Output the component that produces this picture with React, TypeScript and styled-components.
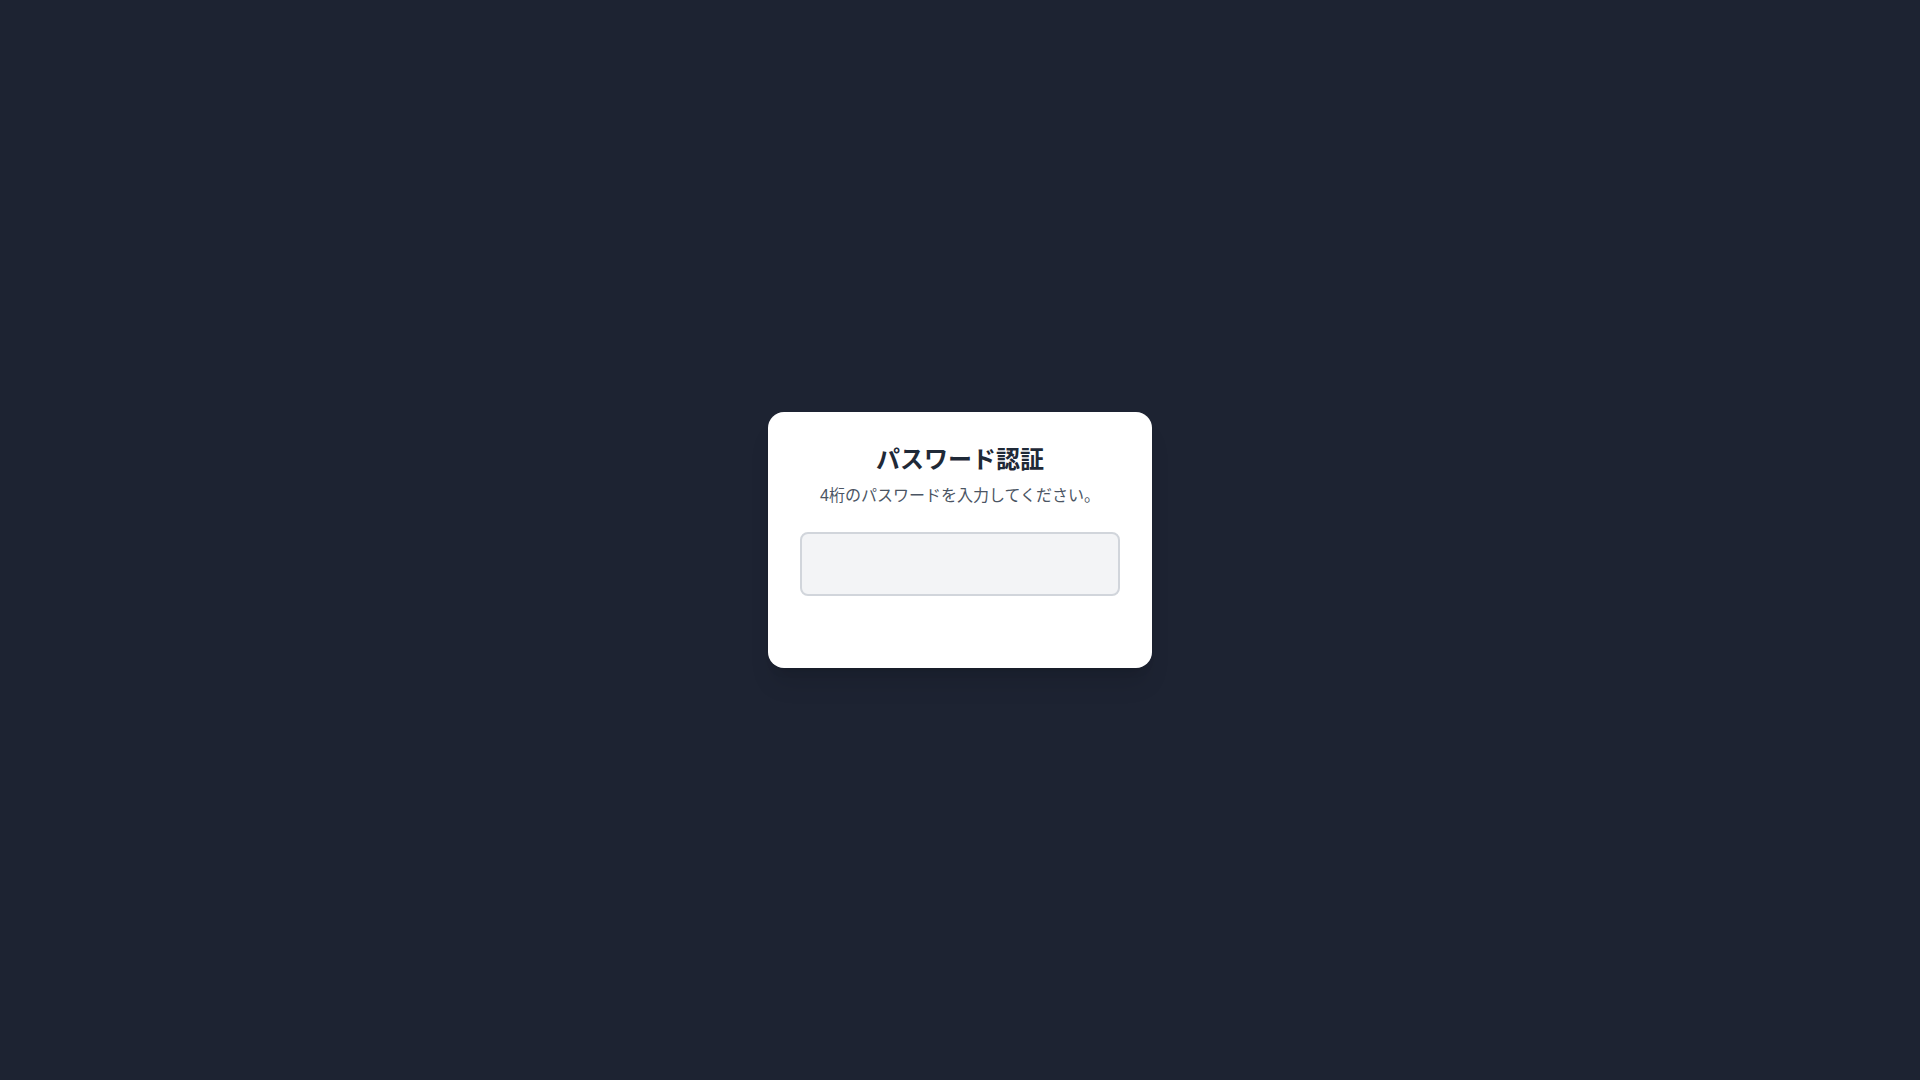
import { useState } from "react";
import type { ChangeEvent } from "react";
import styled, { createGlobalStyle } from "styled-components";

const GlobalStyle = createGlobalStyle`
  * {
    box-sizing: border-box;
  }
  body {
    margin: 0;
    font-family: "Liberation Sans", "Noto Sans CJK JP", sans-serif;
    background-color: #1d2332;
  }
`;

const Container = styled.main`
  display: flex;
  align-items: center;
  justify-content: center;
  min-height: 100vh;
`;

const Card = styled.form`
  width: 100%;
  max-width: 384px;
  padding: 32px;
  text-align: center;
  background-color: #ffffff;
  border-radius: 16px;
  box-shadow: 0 20px 25px -5px rgb(0 0 0 / 10%),
    0 8px 10px -6px rgb(0 0 0 / 10%);
`;

const Title = styled.h1`
  margin: 0 0 8px;
  font-size: 24px;
  line-height: 32px;
  font-weight: 700;
  color: #1f2937;
`;

const Description = styled.label`
  display: block;
  margin-bottom: 24px;
  font-size: 16px;
  line-height: 24px;
  color: #4b5563;
`;

const PasswordInput = styled.input`
  display: block;
  width: 100%;
  height: 64px;
  padding: 0 16px;
  font-family: inherit;
  font-size: 32px;
  text-align: center;
  color: #1f2937;
  background-color: #f3f4f6;
  border: 2px solid #d1d5db;
  border-radius: 8px;
  &:focus {
    outline: none;
    border-color: #3b82f6;
  }
`;

const Message = styled.p`
  height: 24px;
  margin: 16px 0 0;
  font-size: 14px;
  line-height: 24px;
  color: #ef4444;
`;

function App() {
  const [password, setPassword] = useState("");
  const onChange = (event: ChangeEvent<HTMLInputElement>) => {
    setPassword(event.target.value.replace(/\D/g, ""));
  };

  return (
    <>
      <GlobalStyle />
      <Container>
        <Card onSubmit={(event) => event.preventDefault()}>
          <Title>パスワード認証</Title>
          <Description htmlFor="password">
            4桁のパスワードを入力してください。
          </Description>
          <PasswordInput
            id="password"
            type="password"
            inputMode="numeric"
            autoComplete="off"
            maxLength={4}
            value={password}
            onChange={onChange}
          />
          <Message role="alert" />
        </Card>
      </Container>
    </>
  );
}
export default App;
